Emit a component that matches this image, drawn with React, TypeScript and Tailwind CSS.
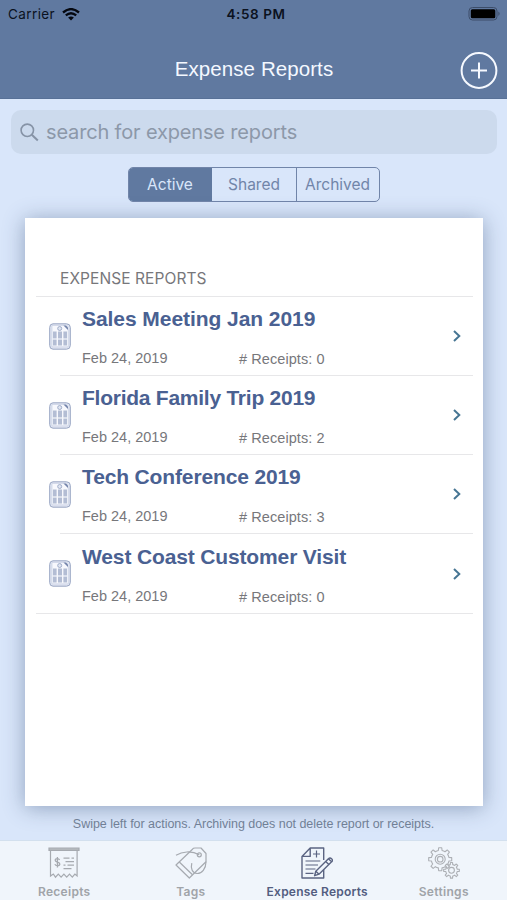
import React from "react";

const helv = "font-['Liberation_Sans',Arial,sans-serif]";

const reports = [
  { title: "Sales Meeting Jan 2019", date: "Feb 24, 2019", count: 0, spacing: "tracking-[-0.06px]" },
  { title: "Florida Family Trip 2019", date: "Feb 24, 2019", count: 2, spacing: "tracking-[-0.25px]" },
  { title: "Tech Conference 2019", date: "Feb 24, 2019", count: 3, spacing: "tracking-[-0.14px]" },
  { title: "West Coast Customer Visit", date: "Feb 24, 2019", count: 0, spacing: "tracking-[-0.14px]" },
];

function gearPath(cx: number, cy: number, inner: number, outer: number, teeth: number) {
  const step = (Math.PI * 2) / teeth;
  const at = (r: number, a: number) =>
    `${(cx + r * Math.sin(a)).toFixed(2)} ${(cy - r * Math.cos(a)).toFixed(2)}`;
  let d = "";
  for (let i = 0; i < teeth; i++) {
    const a = i * step;
    d += `${i === 0 ? "M" : "L"}${at(inner, a - step * 0.27)} L${at(outer, a - step * 0.17)} L${at(outer, a + step * 0.17)} L${at(inner, a + step * 0.27)} A${inner} ${inner} 0 0 1 ${at(inner, a + step * 0.73)} `;
  }
  return d + "Z";
}

function ReceiptIcon() {
  return (
    <svg width="32" height="32" viewBox="0 0 32 32" fill="none" stroke="#a6aab0" strokeWidth="1.2">
      <path d="M1 1h30v2.4H1z" fill="#b9bcc1" />
      <path d="M2.5 3.5V29l2.8-2 2.2 3.2 2.8-3 2.8 3 2.8-3 2.8 3 2.8-3 2.8 3 2.6-3.2 2.2 2V3.5" />
      <path d="M15.5 11.2h6m2 0h2.5M17.5 14.7h8.5M15.5 18.2h2m2 0h6.5M15.5 21.7h8" />
      <path d="M11.6 13c-.5-1.1-1.3-1.4-2.3-1.4-1.3 0-2.1.6-2.1 1.7 0 2.4 4.6 1.2 4.6 3.6 0 1.2-1 1.8-2.4 1.8-1.3 0-2.1-.5-2.5-1.6M9.4 10v10.4" strokeWidth="1.3" />
    </svg>
  );
}

function TagsIcon() {
  return (
    <svg width="32" height="32" viewBox="0 0 32 32" fill="none" stroke="#a6aab0" strokeWidth="1.2" strokeLinejoin="round">
      <path d="M1 18 17.5 2.2Q18.3 1 20 1h6L31 6.5v8.2L14.3 31Z" />
      <path d="m4.3 15 13.2 12.8" />
      <circle cx="24.3" cy="7.8" r="2" />
      <path d="M24.3 7.8C16 3.2 7 4.7 1 8.3" />
      <path d="M31 14.7c0 7-4.2 12-9 11.8-4.6-.2-6.6-5-5.2-10.3" />
    </svg>
  );
}

function ReportIcon() {
  return (
    <svg width="32" height="32" viewBox="0 0 32 32" fill="none" stroke="#5b6482" strokeWidth="1.4" strokeLinejoin="round">
      <path d="M22.7 13V1H9.2L1 9.4V31h21.7v-8.5M9.2 1v8.4H1" />
      <path d="M15.5 3.5v7m-3.5-3.5h7M4.5 14h14.8M4.5 18h12.5M4.5 22h10M4.5 26.4h8" strokeWidth="1.2" />
      <path d="m27.4 11.8 3.2 3L18 27.2l-4.4 1.5 1.2-4.5Z" fill="#f0f5fc" />
      <path d="m24.7 14.4 3.2 3M27.4 11.8q1.6-1.4 3.2 0t0 3M14.8 24.2l3.2 3" />
    </svg>
  );
}

function SettingsIcon() {
  return (
    <svg width="32" height="32" viewBox="0 0 32 32" fill="none" stroke="#adb0b5" strokeWidth="1.1" strokeLinejoin="round">
      <path d={gearPath(12.2, 12.2, 8.9, 11.6, 8)} />
      <circle cx="12.2" cy="12.2" r="5" />
      <circle cx="12.2" cy="12.2" r="2.8" />
      <path d={gearPath(23.5, 23.3, 5.8, 7.9, 8)} />
      <circle cx="23.5" cy="23.3" r="2.9" />
    </svg>
  );
}

function RowIcon() {
  return (
    <svg width="22" height="27" viewBox="0 0 22 27" fill="none">
      <path d="M4 .8h13.5Q21.3.8 21.3 4.5v18Q21.3 26.2 17.5 26.2H4Q.7 26.2.7 22.5v-18Q.7.8 4 .8Z" fill="#dfe4f1" stroke="#99a6c3" />
      <path d="M3 2.5h12.2l4 4v17.3H3Z" fill="#f7f8fd" stroke="#c4cde0" strokeWidth=".6" />
      <path d="M4 8.5h3.6v14H4ZM9 8.5h4v14H9ZM14.4 8.5h3.6v14h-3.6Z" fill="#b3bdd4" />
      <path d="M3.5 16h15" stroke="#f5f7fb" strokeWidth="1.2" />
      <circle cx="10.7" cy="5.5" r="2" fill="#e0e5f1" stroke="#9aa8c6" strokeWidth=".9" />
      <path d="M14.5 2.5 19 7V4.5l-2-2Z" fill="#7484aa" />
    </svg>
  );
}

const tabs = [
  { label: "Receipts", icon: <ReceiptIcon />, style: "text-[#a0a4a9] tracking-[0.28px]" },
  { label: "Tags", icon: <TagsIcon />, style: "text-[#a0a4a9] tracking-[0.25px]" },
  { label: "Expense Reports", icon: <ReportIcon />, style: "text-[#535d80] tracking-[0.22px]" },
  { label: "Settings", icon: <SettingsIcon />, style: "text-[#a0a4a9] tracking-[0.32px]" },
];

export default function App() {
  return (
    <div className={`flex h-[900px] w-[507px] flex-col overflow-hidden bg-[#d9e6fa] ${helv}`}>
      <header className="flex h-[99px] shrink-0 flex-col border-b border-[#587197] bg-[#6079a0]">
        <div className="grid h-7 grid-cols-3 items-center pr-[6px] pl-2 font-['Inter',sans-serif] text-[13.5px] text-[#0b1220]">
          <div className="flex items-center gap-[7px]">
            <span className="tracking-[0.4px]">Carrier</span>
            <svg width="18" height="13" viewBox="0 0 18 13" fill="none" stroke="#050810" strokeWidth="2.3">
              <path d="M1 4.5Q9-2.3 17 4.5M3.8 7.4Q9 3 14.2 7.4" />
              <path d="M6.1 9.5Q9 7.4 11.9 9.5L9 12.5Z" fill="#050810" stroke="none" />
            </svg>
          </div>
          <span className="pl-[3px] text-center font-semibold tracking-[0.6px] whitespace-nowrap">4:58 PM</span>
          <svg className="justify-self-end" width="33" height="14" viewBox="0 0 33 14">
            <rect x="1" y=".5" width="28" height="12.5" rx="3.5" fill="none" stroke="#3c4d69" />
            <rect x="2.8" y="2.3" width="24.5" height="9" rx="1.5" fill="#000" />
            <path d="M30.5 4.5q2 2.2 0 4.4Z" fill="#35445d" />
          </svg>
        </div>
        <div className="grid flex-1 grid-cols-[1fr_auto_1fr] pr-[9px] pl-[10px] text-[#f4f8ff]">
          <span />
          <h1 className="pt-[26px] text-[20.5px] leading-[30px] tracking-[0.08px]">Expense Reports</h1>
          <svg className="mt-6 justify-self-end" width="38" height="38" viewBox="0 0 38 38" fill="none" stroke="#f6f9ff" strokeWidth="2">
            <circle cx="19" cy="18.5" r="17.4" />
            <path d="M19 10.5v16M11 18.5h16" />
          </svg>
        </div>
      </header>

      <div className="mt-[11px] mr-[10px] ml-[11px] flex h-11 shrink-0 items-center rounded-[10px] bg-[#ccdaed] pl-[9px] text-[#8c98a9]">
        <svg width="19" height="19" viewBox="0 0 19 19" fill="none" stroke="#8693a6" strokeWidth="1.6">
          <circle cx="7.3" cy="7.3" r="6.2" />
          <path d="m11.8 11.8 6 5.7" strokeWidth="2" />
        </svg>
        <span className="ml-[7px] font-['Inter',sans-serif] text-[20px] tracking-[-0.16px]">search for expense reports</span>
      </div>

      <div className="mt-[13px] flex h-[35px] w-[252px] shrink-0 self-center overflow-hidden rounded-[5px] border border-[#7185a9] font-['Inter',sans-serif] text-[15.5px] text-[#7185a9]">
        <div className="flex w-[83px] items-center justify-center bg-[#6079a0] pt-px text-[#d9e6fa]">Active</div>
        <div className="flex w-[85px] items-center justify-center border-r border-[#7185a9] pt-px pl-px">Shared</div>
        <div className="flex w-[82px] items-center justify-center pt-px">Archived</div>
      </div>

      <main className="mt-4 mr-6 ml-[25px] flex h-[588px] shrink-0 flex-col bg-white pr-[10px] pl-[11px] shadow-[0_2px_20px_rgba(65,88,125,0.48)]">
        <h2 className="h-[78.5px] border-b border-[#e7e7e9] pt-[51px] pl-6 font-['Inter',sans-serif] text-[15.5px] leading-5 tracking-[0.08px] text-[#77777b]">
          EXPENSE REPORTS
        </h2>
        <ul className="border-b border-[#e7e7e9]">
          {reports.map((r, i) => (
            <li key={r.title} className="flex h-[79.2px]">
              <div className="flex w-6 shrink-0 items-center pl-[13px]">
                <div className="shrink-0"><RowIcon /></div>
              </div>
              <div className={`flex flex-1 items-center justify-between pr-3 pl-[22px] ${i < 3 ? "border-b border-[#e7e7e9]" : ""}`}>
                <div className="pt-[3px]">
                  <div className={`text-[21px] leading-6 font-bold whitespace-nowrap text-[#4a6192] ${r.spacing}`}>{r.title}</div>
                  <div className="mt-[19px] flex text-[14.5px] leading-4 text-[#77777b]">
                    <span className="w-[157px]">{r.date}</span>
                    <span className="pt-px tracking-[0.08px]"># Receipts: {r.count}</span>
                  </div>
                </div>
                <svg width="8" height="12" viewBox="0 0 8 12" fill="none" stroke="#467593" strokeWidth="2">
                  <path d="m1 1 5.3 5L1 11" />
                </svg>
              </div>
            </li>
          ))}
        </ul>
      </main>

      <p className="mt-[10px] text-center text-[12.5px] leading-4 tracking-[-0.03px] whitespace-nowrap text-[#718096]">
        Swipe left for actions. Archiving does not delete report or receipts.
      </p>

      <nav className="mt-auto grid h-[60px] shrink-0 grid-cols-4 border-t border-[#d3e0ee] bg-[#f0f5fb] pl-px">
        {tabs.map((t) => (
          <div key={t.label} className="flex flex-col items-center pt-[6px]">
            {t.icon}
            <span className={`mt-[5px] font-['Inter',sans-serif] text-[12px] leading-4 font-semibold whitespace-nowrap ${t.style}`}>{t.label}</span>
          </div>
        ))}
      </nav>
    </div>
  );
}
